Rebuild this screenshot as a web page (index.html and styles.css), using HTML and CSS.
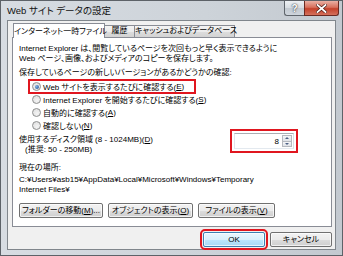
FILE: index.html
```html
<!DOCTYPE html>
<html>
<head>
    <meta charset="utf-8">
    <title>Web サイト データの設定</title>
    <link rel="stylesheet" href="styles.css">
</head>
<body>
    <div class="window">
        <div class="titlebar">
            <span class="title">Web サイト データの設定</span>
            <div class="caption-buttons">
                <div class="cap help">?</div>
                <div class="cap close">
                    <svg width="11" height="9" viewBox="0 0 11 9">
                        <path d="M1.5 1 L9.5 8 M9.5 1 L1.5 8" stroke="#4a1a14" stroke-width="3.2" stroke-linecap="square"/>
                        <path d="M1.5 1 L9.5 8 M9.5 1 L1.5 8" stroke="#fff" stroke-width="1.8" stroke-linecap="square"/>
                    </svg>
                </div>
            </div>
        </div>

        <div class="client">
            <div class="tabs">
                <div class="tab active">インターネット一時ファイル</div>
                <div class="tab tab-history">履歴</div>
                <div class="tab tab-cache">キャッシュおよびデータベース</div>
            </div>

            <div class="panel">
                <p class="desc">Internet Explorer は、閲覧しているページを次回もっと早く表示できるように<br>Web ページ、画像、およびメディアのコピーを保存します。</p>
                <p class="label">保存しているページの新しいバージョンがあるかどうかの確認:</p>

                <div class="radios">
                    <div class="radio marked"><span class="dot checked"></span>Web サイトを表示するたびに確認する(<u>E</u>)</div>
                    <div class="radio"><span class="dot"></span>Internet Explorer を開始するたびに確認する(<u>S</u>)</div>
                    <div class="radio"><span class="dot"></span>自動的に確認する(<u>A</u>)</div>
                    <div class="radio"><span class="dot"></span>確認しない(<u>N</u>)</div>
                </div>

                <div class="disk">
                    <div class="disk-text">
                        使用するディスク領域 (8 - 1024MB)(<u>D</u>)<br>
                        <span class="hint">(推奨: 50 - 250MB)</span>
                    </div>
                    <div class="spin">
                        <span class="spin-value">8</span>
                        <div class="spin-arrows">
                            <div class="arrow up"></div>
                            <div class="arrow down"></div>
                        </div>
                    </div>
                </div>

                <p class="location-label">現在の場所:</p>
                <p class="path">C:¥Users¥asb15¥AppData¥Local¥Microsoft¥Windows¥Temporary<br>Internet Files¥</p>

                <div class="panel-buttons">
                    <button class="btn btn-move">フォルダーの移動(<u>M</u>)...</button>
                    <button class="btn btn-objects">オブジェクトの表示(<u>O</u>)</button>
                    <button class="btn btn-files">ファイルの表示(<u>V</u>)</button>
                </div>
            </div>

            <div class="dialog-buttons">
                <button class="btn btn-default">OK</button>
                <button class="btn">キャンセル</button>
            </div>
        </div>
    </div>
</body>
</html>
```

FILE: styles.css
```css
body {
    margin: 0;
    width: 343px;
    height: 256px;
    overflow: hidden;
    font-family: "Liberation Sans", "Noto Sans CJK JP", sans-serif;
    font-size: 8px;
    font-feature-settings: "palt";
    color: #000;
}

p {
    margin: 0;
}

.window {
    box-sizing: border-box;
    width: 343px;
    height: 256px;
    border: 1px solid #5d6268;
    background: linear-gradient(to right, #d7dce2, #cdd3d9 60%, #c3c9d0);
    padding: 0 6px 5px;
    display: flex;
    flex-direction: column;
}

/* title bar */
.titlebar {
    height: 19px;
    display: flex;
    align-items: center;
    justify-content: space-between;
    margin-right: -3px;
}

.title {
    font-size: 9.5px;
    line-height: 12px;
    color: #111;
}

.caption-buttons {
    display: flex;
    align-self: flex-start;
}

.cap {
    box-sizing: border-box;
    height: 15px;
    display: flex;
    align-items: center;
    justify-content: center;
    border: 1px solid #5f656c;
    border-top: none;
}

.help {
    width: 20px;
    border-radius: 0 0 0 3px;
    border-right: none;
    background: linear-gradient(#eef1f4, #d6dce2 50%, #c2c9d1 51%, #cfd5dc);
    color: #fff;
    font-weight: bold;
    font-size: 10px;
    text-shadow: 0 0 2px #3c4148, 0 0 1px #3c4148;
}

.close {
    width: 35px;
    border-radius: 0 0 3px 0;
    border-color: #6b2a22;
    background: linear-gradient(#eab0a4, #d8705c 45%, #c4412a 55%, #d4705c);
}

/* client area */
.client {
    flex: 1;
    border: 1px solid #80868c;
    background: #f0f0f0;
    padding: 2px 3px 0 4px;
    display: flex;
    flex-direction: column;
}

.tabs {
    display: flex;
    height: 15px;
    padding-left: 1px;
}

.tab {
    box-sizing: border-box;
    height: 12px;
    margin-top: 2px;
    border: 1px solid #898c95;
    border-bottom: none;
    margin-left: -1px;
    background: linear-gradient(#f3f3f3, #ebebeb 50%, #dddddd 51%, #d3d3d3);
    line-height: 10px;
    text-align: center;
    white-space: nowrap;
}

.tab.active {
    position: relative;
    z-index: 1;
    width: 92px;
    height: 15px;
    margin-top: 0;
    margin-left: 0;
    background: #fff;
    line-height: 14px;
    padding-top: 1px;
}

.tab-history {
    width: 31px;
}

.tab-cache {
    width: 101px;
}

.panel {
    box-sizing: border-box;
    height: 190px;
    margin-top: -1px;
    border: 1px solid #898c95;
    background: #fff;
    padding: 6px 6px 0 6px;
}

.desc,
.label,
.location-label,
.path,
.disk-text {
    line-height: 10px;
}

.label {
    margin-top: 4px;
}

.radios {
    margin-top: 2px;
}

.radio {
    height: 13px;
    display: flex;
    align-items: center;
    margin-left: 10px;
    padding-left: 3px;
    white-space: nowrap;
}

.radio.marked {
    width: 163px;
    outline: 2px solid #e0161f;
    outline-offset: -1px;
}

.dot {
    box-sizing: border-box;
    width: 9px;
    height: 9px;
    margin-right: 2px;
    border: 1px solid #8e8f8f;
    border-radius: 50%;
    background: radial-gradient(circle at 60% 65%, #f4f4f4, #dcdcdc);
    display: flex;
    align-items: center;
    justify-content: center;
}

.dot.checked::after {
    content: "";
    width: 4px;
    height: 4px;
    border-radius: 50%;
    background: radial-gradient(circle at 35% 35%, #7fb1e4, #1f4f8f);
}

.disk {
    margin-top: 3px;
    display: flex;
    align-items: flex-start;
}

.disk-text {
    width: 215px;
    flex: none;
}

.hint {
    padding-left: 6px;
}

.spin {
    box-sizing: border-box;
    width: 60px;
    height: 16px;
    margin-top: -2px;
    flex: none;
    border: 1px solid #abadb3;
    border-bottom-color: #e3e9ef;
    border-left-color: #e2e3ea;
    border-right-color: #dbdfe6;
    display: flex;
    align-items: center;
    outline: 2px solid #e0161f;
    outline-offset: 2px;
}

.spin-value {
    flex: 1;
    text-align: right;
    padding-right: 3px;
}

.spin-arrows {
    width: 10px;
    height: 12px;
    margin-right: 1px;
    display: flex;
    flex-direction: column;
}

.arrow {
    box-sizing: border-box;
    flex: 1;
    border: 1px solid #b5b9bf;
    background: linear-gradient(#f4f5f7, #dfe3e8);
    display: flex;
    align-items: center;
    justify-content: center;
}

.arrow.down {
    border-top: none;
}

.arrow.up::after {
    content: "";
    border-left: 2px solid transparent;
    border-right: 2px solid transparent;
    border-bottom: 2px solid #4d6185;
}

.arrow.down::after {
    content: "";
    border-left: 2px solid transparent;
    border-right: 2px solid transparent;
    border-top: 2px solid #4d6185;
}

.location-label {
    margin-top: 8px;
}

.path {
    margin-top: 2px;
}

/* buttons */
.btn {
    box-sizing: border-box;
    height: 15px;
    padding: 0;
    border: 1px solid #707070;
    border-radius: 2px;
    background: linear-gradient(#f2f2f2, #ebebeb 50%, #dddddd 51%, #cfcfcf);
    box-shadow: inset 0 0 0 1px rgba(255, 255, 255, 0.7);
    font: inherit;
    line-height: 12px;
    color: #000;
    white-space: nowrap;
}

.panel-buttons {
    display: flex;
    gap: 5px;
    margin-top: 8px;
}

.btn-move {
    width: 84px;
}

.btn-objects {
    width: 85px;
}

.btn-files {
    width: 77px;
}

.dialog-buttons {
    display: flex;
    justify-content: flex-end;
    gap: 5px;
    margin-top: 5px;
}

.dialog-buttons .btn {
    width: 62px;
}

.btn-default {
    border-color: #3c7fb1;
    background: linear-gradient(#eaf6fd, #d9f0fc 50%, #bee6fd 51%, #a7d9f5);
    outline: 2px solid #e0161f;
    outline-offset: 1px;
}
```
